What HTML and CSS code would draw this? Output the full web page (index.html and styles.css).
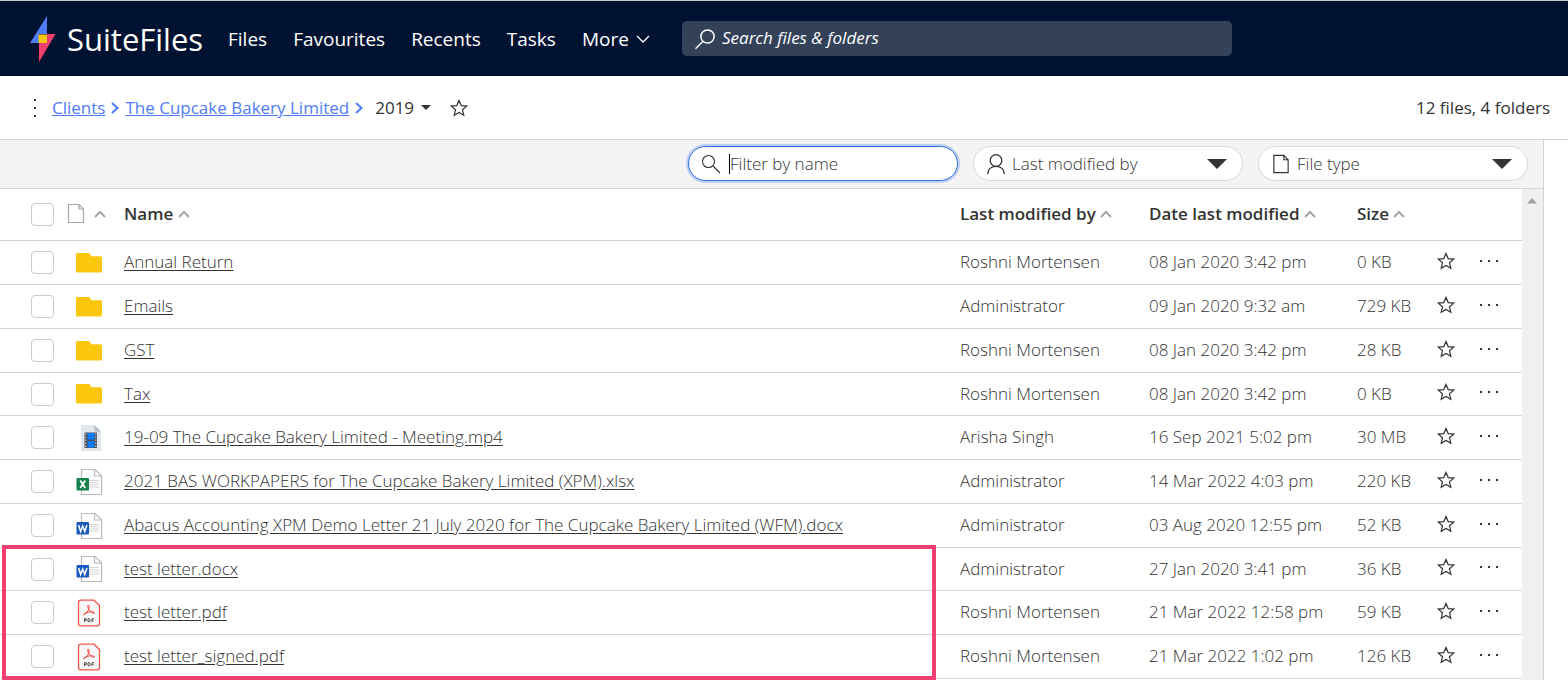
FILE: index.html
```html
<!DOCTYPE html>
<html lang="en">
<head>
<meta charset="utf-8">
<title>SuiteFiles</title>
<link rel="stylesheet" href="styles.css">
</head>
<body>
<svg class="sprite" aria-hidden="true">
  <symbol id="star" viewBox="0 0 18 18"><path d="M9 1.400 L11.200 6.600 L16.800 7.100 L12.500 10.800 L13.800 16.300 L9 13.400 L4.200 16.300 L5.500 10.800 L1.200 7.100 L6.800 6.600 Z" fill="none" stroke="currentColor" stroke-width="1.200"/></symbol>
  <symbol id="dots" viewBox="0 0 20 4"><path d="M1 1h2v2H1zM9 1h2v2H9zM17 1h2v2h-2z" fill="currentColor"/></symbol>
  <symbol id="sort" viewBox="0 0 12 8"><path d="M1 7 L6 2 L11 7" fill="none" stroke="#a6a6a6" stroke-width="2"/></symbol>
  <symbol id="page" viewBox="0 0 18 21"><path d="M1.500 1.500H12L16.500 6V19.500H1.500ZM12 1.500V6H16.500" fill="none" stroke="currentColor" stroke-width="1.200"/></symbol>
  <symbol id="folder" viewBox="0 0 28 22"><path d="M2.500 1H13.500Q14.500 1 15 2L16.200 4.200H25.500Q27 4.200 27 5.700V19Q27 20.500 25.500 20.500H2.500Q1 20.500 1 19V2.500Q1 1 2.500 1Z" fill="#fbc70d"/></symbol>
  <symbol id="video" viewBox="0 0 28 28"><path d="M6 1H19.500L26 7.500V27H6Z" fill="#e1e6ea"/><path d="M19.500 1L26 7.500H19.500Z" fill="#b2bcc6"/><path d="M9.500 8.500H22V24H9.500Z" fill="#4a4f57"/><path d="M12.500 9H19.500V15.500H12.500ZM12.500 17H19.500V23.500H12.500Z" fill="#0a7bff"/><path d="M10.700 9.500V24M20.800 9.500V24" stroke="#d5dade" stroke-width="1.200" stroke-dasharray="1.200 1.800"/></symbol>
  <symbol id="sheet" viewBox="0 0 28 28"><path d="M6.500 1.500H20L26.500 8V26.500H6.500Z" fill="#fff" stroke="#b9b9b9" stroke-width="1.200"/><path d="M19.500 1.500V8H26.500" fill="none" stroke="#b9b9b9" stroke-width="1.200"/><path d="M14 12.500H24M14 14.700H24M14 16.900H24M14 19.100H24" stroke="#d4d4d4"/></symbol>
  <symbol id="excel" viewBox="0 0 28 28"><use href="#sheet"/><rect x="1.500" y="10" width="12.500" height="12.500" rx="1" fill="#12824a"/><path d="M5.300 12.500L10.200 20M10.200 12.500L5.300 20" stroke="#fff" stroke-width="1.900"/></symbol>
  <symbol id="word" viewBox="0 0 28 28"><use href="#sheet"/><rect x="1.500" y="10" width="12.500" height="12.500" rx="1" fill="#185abd"/><path d="M3.600 13L5.600 19.500L7.700 14L9.800 19.500L11.900 13" fill="none" stroke="#fff" stroke-width="1.500"/></symbol>
  <symbol id="pdf" viewBox="0 0 28 28"><path d="M5.500 1.200H19L24.500 6.500V24.500Q24.500 26.800 22.500 26.800H5.500Q3.500 26.800 3.500 24.500V3.500Q3.500 1.200 5.500 1.200Z" fill="#f6f6f6" stroke="#f4544e" stroke-width="1.300"/><path d="M12.800 6.500C14.800 5.800 14.500 8.500 13.300 10.800C12 13.500 10 16.200 8.700 15.700C8.200 14.500 12.500 13 15 12.900C17.500 12.700 20 13.200 19.300 14.200C17.500 14.800 12.300 10.500 12.800 6.500Z" fill="none" stroke="#f2322b" stroke-width="0.900"/><path d="M9.500 23.200V19.700H11.300V21.500H9.500M13 19.700V22.800H14L15.200 22V20.500L14.200 19.700ZM17 23.200V19.700H19M17 21.400H18.500" fill="none" stroke="#444" stroke-width="0.900"/></symbol>
</svg>

<header class="topbar">
  <a class="brand" href="#">
    <svg class="brand-mark" viewBox="0 0 26 46" aria-hidden="true"><path d="M17 0V18H9V27H0Z" fill="#4f7df9"/><path d="M9 46V27H17V18H25.500Z" fill="#ef3f6f"/><path d="M8.500 18.500H17V27H8.500Z" fill="#fbc70d"/></svg>
    <span>SuiteFiles</span>
  </a>
  <nav class="nav">
    <a href="#">Files</a>
    <a href="#">Favourites</a>
    <a href="#">Recents</a>
    <a href="#">Tasks</a>
    <a href="#">More <svg class="nav-arrow" viewBox="0 0 14 8" aria-hidden="true"><path d="M1 1L7 7L13 1" fill="none" stroke="currentColor" stroke-width="1.300"/></svg></a>
  </nav>
  <label class="search">
    <svg class="search-icon" viewBox="0 0 22 22" aria-hidden="true"><circle cx="13.500" cy="8.500" r="6.600" fill="none" stroke="currentColor" stroke-width="1.500"/><path d="M9 13.300L1.500 20.800" stroke="currentColor" stroke-width="1.500"/></svg>
    <input type="text" placeholder="Search files &amp; folders" aria-label="Search files and folders">
  </label>
</header>

<div class="crumbs">
  <button class="icon-button" aria-label="Folder options"><svg class="kebab" viewBox="0 0 4 20"><path d="M1 1h2v2H1zM1 9h2v2H1zM1 17h2v2H1z" fill="currentColor"/></svg></button>
  <a href="#">Clients</a>
  <svg class="crumb-arrow" viewBox="0 0 8 12" aria-hidden="true"><path d="M1 1L6.500 6L1 11" fill="none" stroke="currentColor" stroke-width="2"/></svg>
  <a href="#">The Cupcake Bakery Limited</a>
  <svg class="crumb-arrow" viewBox="0 0 8 12" aria-hidden="true"><path d="M1 1L6.500 6L1 11" fill="none" stroke="currentColor" stroke-width="2"/></svg>
  <button class="current">2019 <svg class="caret-down" viewBox="0 0 10 6" aria-hidden="true"><path d="M0 0H10L5 5Z" fill="currentColor"/></svg></button>
  <button class="icon-button" aria-label="Favourite this folder"><svg class="star"><use href="#star"/></svg></button>
  <span class="summary">12 files, 4 folders</span>
</div>

<main class="panel">
  <div class="filters">
    <label class="filter focused">
      <svg class="filter-icon" viewBox="0 0 20 20" aria-hidden="true"><circle cx="7.500" cy="7.500" r="6" fill="none" stroke="currentColor" stroke-width="1.100"/><path d="M12 12L19 19" stroke="currentColor" stroke-width="1.100"/></svg>
      <span class="text-cursor"></span>
      <input type="text" placeholder="Filter by name" aria-label="Filter by name">
    </label>
    <label class="filter">
      <svg class="filter-icon" viewBox="0 0 20 20" aria-hidden="true"><circle cx="10" cy="6.500" r="5.800" fill="none" stroke="currentColor" stroke-width="1.300"/><path d="M1.800 20C2 15.500 5 12.300 10 12.300C15 12.300 18 15.500 18.200 20" fill="none" stroke="currentColor" stroke-width="1.300"/></svg>
      <select aria-label="Last modified by"><option>Last modified by</option></select>
      <svg class="filter-arrow" viewBox="0 0 20 10" aria-hidden="true"><path d="M0 0H20L10 10Z" fill="currentColor"/></svg>
    </label>
    <label class="filter">
      <svg class="filter-icon" aria-hidden="true"><use href="#page"/></svg>
      <select aria-label="File type"><option>File type</option></select>
      <svg class="filter-arrow" viewBox="0 0 20 10" aria-hidden="true"><path d="M0 0H20L10 10Z" fill="currentColor"/></svg>
    </label>
  </div>

  <div class="list">
    <table class="files">
      <colgroup><col class="col-check"><col class="col-icon"><col><col class="col-by"><col class="col-date"><col class="col-size"><col class="col-star"><col class="col-more"></colgroup>
      <thead>
        <tr>
          <th class="check"><input type="checkbox" aria-label="Select all"></th>
          <th><span class="type-head"><svg class="page"><use href="#page"/></svg><svg class="sort"><use href="#sort"/></svg></span></th>
          <th>Name <svg class="sort"><use href="#sort"/></svg></th>
          <th>Last modified by <svg class="sort"><use href="#sort"/></svg></th>
          <th>Date last modified <svg class="sort"><use href="#sort"/></svg></th>
          <th>Size <svg class="sort"><use href="#sort"/></svg></th>
          <th></th>
          <th></th>
        </tr>
      </thead>
      <tbody>
        <tr><td class="check"><input type="checkbox" aria-label="Select Annual Return"></td><td class="type"><svg class="folder"><use href="#folder"/></svg></td><td><a href="#">Annual Return</a></td><td>Roshni Mortensen</td><td>08 Jan 2020 3:42 pm</td><td>0 KB</td><td class="action"><button class="icon-button" aria-label="Favourite"><svg class="star"><use href="#star"/></svg></button></td><td class="action"><button class="icon-button" aria-label="More"><svg class="dots"><use href="#dots"/></svg></button></td></tr>
        <tr><td class="check"><input type="checkbox" aria-label="Select Emails"></td><td class="type"><svg class="folder"><use href="#folder"/></svg></td><td><a href="#">Emails</a></td><td>Administrator</td><td>09 Jan 2020 9:32 am</td><td>729 KB</td><td class="action"><button class="icon-button" aria-label="Favourite"><svg class="star"><use href="#star"/></svg></button></td><td class="action"><button class="icon-button" aria-label="More"><svg class="dots"><use href="#dots"/></svg></button></td></tr>
        <tr><td class="check"><input type="checkbox" aria-label="Select GST"></td><td class="type"><svg class="folder"><use href="#folder"/></svg></td><td><a href="#">GST</a></td><td>Roshni Mortensen</td><td>08 Jan 2020 3:42 pm</td><td>28 KB</td><td class="action"><button class="icon-button" aria-label="Favourite"><svg class="star"><use href="#star"/></svg></button></td><td class="action"><button class="icon-button" aria-label="More"><svg class="dots"><use href="#dots"/></svg></button></td></tr>
        <tr><td class="check"><input type="checkbox" aria-label="Select Tax"></td><td class="type"><svg class="folder"><use href="#folder"/></svg></td><td><a href="#">Tax</a></td><td>Roshni Mortensen</td><td>08 Jan 2020 3:42 pm</td><td>0 KB</td><td class="action"><button class="icon-button" aria-label="Favourite"><svg class="star"><use href="#star"/></svg></button></td><td class="action"><button class="icon-button" aria-label="More"><svg class="dots"><use href="#dots"/></svg></button></td></tr>
        <tr><td class="check"><input type="checkbox" aria-label="Select Meeting.mp4"></td><td class="type"><svg class="file"><use href="#video"/></svg></td><td><a href="#">19-09 The Cupcake Bakery Limited - Meeting.mp4</a></td><td>Arisha Singh</td><td>16 Sep 2021 5:02 pm</td><td>30 MB</td><td class="action"><button class="icon-button" aria-label="Favourite"><svg class="star"><use href="#star"/></svg></button></td><td class="action"><button class="icon-button" aria-label="More"><svg class="dots"><use href="#dots"/></svg></button></td></tr>
        <tr><td class="check"><input type="checkbox" aria-label="Select 2021 BAS WORKPAPERS"></td><td class="type"><svg class="file"><use href="#excel"/></svg></td><td><a href="#">2021 BAS WORKPAPERS for The Cupcake Bakery Limited (XPM).xlsx</a></td><td>Administrator</td><td>14 Mar 2022 4:03 pm</td><td>220 KB</td><td class="action"><button class="icon-button" aria-label="Favourite"><svg class="star"><use href="#star"/></svg></button></td><td class="action"><button class="icon-button" aria-label="More"><svg class="dots"><use href="#dots"/></svg></button></td></tr>
        <tr><td class="check"><input type="checkbox" aria-label="Select Abacus Accounting letter"></td><td class="type"><svg class="file"><use href="#word"/></svg></td><td><a href="#">Abacus Accounting XPM Demo Letter 21 July 2020 for The Cupcake Bakery Limited (WFM).docx</a></td><td>Administrator</td><td>03 Aug 2020 12:55 pm</td><td>52 KB</td><td class="action"><button class="icon-button" aria-label="Favourite"><svg class="star"><use href="#star"/></svg></button></td><td class="action"><button class="icon-button" aria-label="More"><svg class="dots"><use href="#dots"/></svg></button></td></tr>
        <tr><td class="check"><input type="checkbox" aria-label="Select test letter.docx"></td><td class="type"><svg class="file"><use href="#word"/></svg></td><td><a href="#">test letter.docx</a></td><td>Administrator</td><td>27 Jan 2020 3:41 pm</td><td>36 KB</td><td class="action"><button class="icon-button" aria-label="Favourite"><svg class="star"><use href="#star"/></svg></button></td><td class="action"><button class="icon-button" aria-label="More"><svg class="dots"><use href="#dots"/></svg></button></td></tr>
        <tr><td class="check"><input type="checkbox" aria-label="Select test letter.pdf"></td><td class="type"><svg class="file"><use href="#pdf"/></svg></td><td><a href="#">test letter.pdf</a></td><td>Roshni Mortensen</td><td>21 Mar 2022 12:58 pm</td><td>59 KB</td><td class="action"><button class="icon-button" aria-label="Favourite"><svg class="star"><use href="#star"/></svg></button></td><td class="action"><button class="icon-button" aria-label="More"><svg class="dots"><use href="#dots"/></svg></button></td></tr>
        <tr><td class="check"><input type="checkbox" aria-label="Select test letter_signed.pdf"></td><td class="type"><svg class="file"><use href="#pdf"/></svg></td><td><a href="#">test letter_signed.pdf</a></td><td>Roshni Mortensen</td><td>21 Mar 2022 1:02 pm</td><td>126 KB</td><td class="action"><button class="icon-button" aria-label="Favourite"><svg class="star"><use href="#star"/></svg></button></td><td class="action"><button class="icon-button" aria-label="More"><svg class="dots"><use href="#dots"/></svg></button></td></tr>
      </tbody>
    </table>
    <div class="scrollbar"><svg class="scroll-up" viewBox="0 0 10 6" aria-hidden="true"><path d="M0 5.500L5 0L10 5.500Z" fill="#a3a3a3"/></svg></div>
    <div class="highlight"></div>
  </div>
</main>
</body>
</html>
```
FILE: styles.css
```css
* {
  box-sizing: border-box;
}

body {
  margin: 0;
  min-height: 100vh;
  display: flex;
  flex-direction: column;
  overflow: hidden;
  background: #fff;
  color: #333;
  font-family: "Open Sans", "Noto Sans", sans-serif;
  font-size: 17px;
  font-weight: 300;
}

svg {
  display: block;
  flex: none;
}

button,
input,
select {
  font: inherit;
  color: inherit;
}

.sprite {
  position: absolute;
  width: 0;
  height: 0;
}

.topbar {
  display: flex;
  align-items: center;
  height: 76px;
  padding-left: 30px;
  border-top: 1px solid #c4cbcb;
  background: #001232;
  color: #fff;
}

.brand {
  display: flex;
  align-items: center;
  gap: 11px;
  width: 198px;
  color: inherit;
  font-size: 31px;
  font-weight: 500;
  text-decoration: none;
}

.brand-mark {
  width: 26px;
  height: 46px;
}

.nav {
  display: flex;
  gap: 26px;
  width: 454px;
  font-size: 19px;
  font-weight: 500;
}

.nav a {
  display: flex;
  align-items: center;
  gap: 7px;
  color: inherit;
  text-decoration: none;
}

.nav-arrow {
  width: 14px;
  height: 8px;
}

.search {
  display: flex;
  align-items: center;
  gap: 6px;
  width: 550px;
  height: 35px;
  padding-left: 12px;
  border-radius: 5px;
  background: #334159;
}

.search-icon {
  width: 22px;
  height: 22px;
}

.search input {
  flex: 1;
  padding: 0 0 2px;
  border: 0;
  outline: 0;
  background: none;
  font-style: italic;
  font-weight: 400;
}

.search input::placeholder {
  color: #fff;
  opacity: 1;
}

.crumbs {
  display: flex;
  align-items: center;
  gap: 6px;
  height: 64px;
  padding: 0 18px 0 33px;
  border-bottom: 1px solid #d3d3d3;
  font-weight: 400;
}

.crumbs a,
.crumb-arrow {
  color: #4f7df9;
}

.crumb-arrow {
  width: 8px;
  height: 12px;
}

.icon-button {
  display: block;
  padding: 0;
  border: 0;
  background: none;
}

.kebab {
  width: 4px;
  height: 20px;
  margin-right: 9px;
}

.current {
  display: flex;
  align-items: center;
  gap: 7px;
  margin: 0 13px 0 6px;
  padding: 0;
  border: 0;
  background: none;
}

.caret-down {
  width: 10px;
  height: 6px;
}

.star {
  width: 18px;
  height: 18px;
}

.summary {
  margin-left: auto;
}

.panel {
  flex: 1;
  display: flex;
  flex-direction: column;
  margin-right: 24px;
  border-right: 1px solid #d3d3d3;
}

.filters {
  display: flex;
  justify-content: flex-end;
  gap: 15px;
  height: 49px;
  padding: 6px 15px 7px 0;
  border-bottom: 1px solid #d3d3d3;
  background: #f4f4f4;
}

.filter {
  display: flex;
  align-items: center;
  width: 270px;
  height: 35px;
  padding: 0 15px 0 12px;
  border: 1px solid #d8d8d8;
  border-radius: 18px;
  background: #fff;
}

.filter.focused {
  border-color: #2f6fde;
  box-shadow: 0 0 0 2px #bdd0f4;
}

.filter-icon {
  width: 20px;
  height: 20px;
  margin-right: 6px;
}

.filter input,
.filter select {
  flex: 1;
  min-width: 0;
  padding: 0;
  border: 0;
  outline: 0;
  appearance: none;
  background: none;
}

.filter input::placeholder {
  color: #333;
  opacity: 1;
}

.text-cursor {
  width: 1px;
  height: 20px;
  margin-left: 2px;
  background: #000;
}

.filter-arrow {
  width: 20px;
  height: 10px;
}

.list {
  position: relative;
  flex: 1;
  display: flex;
}

.files {
  flex: 1;
  width: 100%;
  align-self: flex-start;
  table-layout: fixed;
  border-collapse: separate;
  border-spacing: 0;
}

.col-check { width: 66px; }
.col-icon { width: 58px; }
.col-by { width: 189px; }
.col-date { width: 208px; }
.col-size { width: 80px; }
.col-star { width: 42px; }
.col-more { width: 43px; }

.files th,
.files td {
  height: 44px;
  padding: 0 0 2px;
  border-bottom: 1px solid #d8d8d8;
  text-align: left;
  white-space: nowrap;
}

.files th {
  height: 52px;
  border-color: #cfcfd6;
  font-size: 17px;
  font-weight: 600;
}

.files tr:nth-child(4n) td {
  height: 43px;
}

.files td a {
  color: inherit;
  text-underline-offset: 2px;
}

.files .check {
  padding: 0 0 0 31px;
}

.files .type {
  padding: 0 0 0 9px;
}

.files .action {
  padding-bottom: 4px;
}

.check input {
  display: block;
  width: 23px;
  height: 23px;
  margin: 0;
  appearance: none;
  border: 1px solid #cbcbd4;
  border-radius: 4px;
  background: #fff;
}

.type-head {
  display: flex;
  align-items: center;
  gap: 8px;
}

.page {
  width: 20px;
  height: 21px;
  color: #a6a6a6;
}

.sort {
  width: 12px;
  height: 8px;
}

th > .sort {
  display: inline-block;
  vertical-align: 2px;
}

.folder {
  width: 28px;
  height: 22px;
}

.file {
  width: 28px;
  height: 28px;
}

.dots {
  width: 20px;
  height: 4px;
}

.scrollbar {
  flex: none;
  width: 21px;
  padding: 9px 5px;
  background: #f0f0f0;
}

.scroll-up {
  width: 10px;
  height: 6px;
}

.highlight {
  position: absolute;
  top: 356px;
  left: 2px;
  right: 607px;
  height: 135px;
  border: 4px solid #f03e70;
  pointer-events: none;
}
```
